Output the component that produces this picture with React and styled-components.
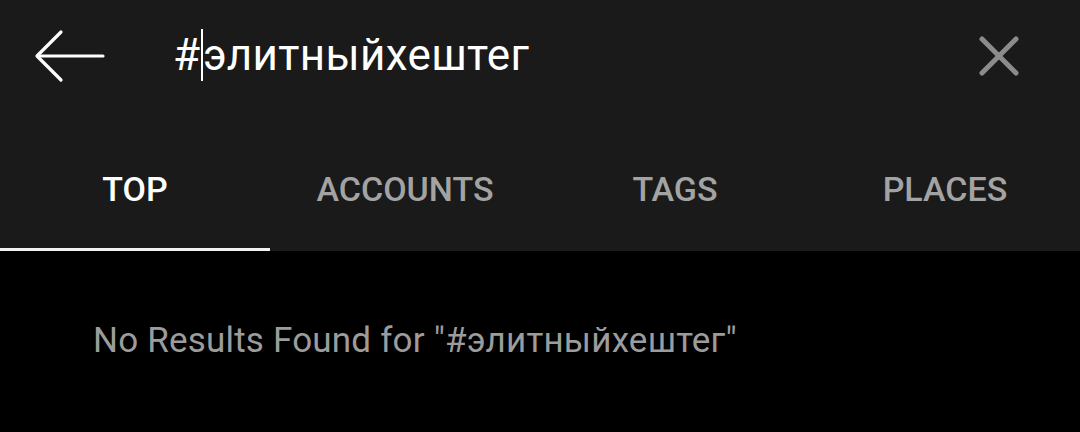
import React from "react";
import styled, { createGlobalStyle } from "styled-components";

const Global = createGlobalStyle`
  html, body { margin: 0; padding: 0; background: #000; }
  body { font-family: Roboto, "Noto Sans", sans-serif; }
`;

const Page = styled.div`
  width: 1080px;
  height: 432px;
  background: #000;
  display: flex;
  flex-direction: column;
  overflow: hidden;
`;

const Header = styled.div`
  background: #1a1a1a;
  display: flex;
  flex-direction: column;
`;

const SearchBar = styled.div`
  height: 112px;
  display: flex;
  align-items: center;
  padding: 0 61px 0 34px;
`;

const IconButton = styled.div`
  display: flex;
  align-items: center;
  justify-content: center;
  flex: none;
`;

const Query = styled.div`
  flex: 1;
  margin-left: 67px;
  color: #fff;
  font-size: 44px;
  letter-spacing: 0.35px;
  display: flex;
  align-items: center;
  margin-top: -2px;
`;

const Caret = styled.span`
  display: inline-block;
  width: 1.5px;
  height: 52px;
  background: #fff;
  margin: 0 0 0 1px;
`;

const Tabs = styled.div`
  display: grid;
  grid-template-columns: repeat(4, 1fr);
  height: 139px;
`;

const Tab = styled.div`
  display: flex;
  align-items: center;
  justify-content: center;
  font-size: 34px;
  font-weight: 500;
  color: ${p => (p.$active ? "#ffffff" : "#a3a3a3")};
  border-bottom: 3px solid ${p => (p.$active ? "#f2f2f2" : "transparent")};
  padding-top: 18px;
  box-sizing: border-box;
`;

const Empty = styled.div`
  padding: 69px 0 0 93px;
  color: #9c9c9c;
  font-size: 35px;
  letter-spacing: 0.2px;
`;

export default function App() {
  return (
    <Page>
      <Global />
      <Header>
        <SearchBar>
          <IconButton>
            <svg width="72" height="56" viewBox="0 0 72 56" fill="none" stroke="#fff" strokeWidth="3.2" strokeLinecap="round" strokeLinejoin="round">
              <path d="M69 28 H4" />
              <path d="M27 4 L3 28 L27 52" />
            </svg>
          </IconButton>
          <Query>
            #<Caret />элитныйхештег
          </Query>
          <IconButton>
            <svg width="40" height="40" viewBox="0 0 40 40" fill="none" stroke="#8c8c8c" strokeWidth="5" strokeLinecap="round">
              <path d="M3 3 L37 37" />
              <path d="M37 3 L3 37" />
            </svg>
          </IconButton>
        </SearchBar>
        <Tabs>
          <Tab $active>TOP</Tab>
          <Tab>ACCOUNTS</Tab>
          <Tab>TAGS</Tab>
          <Tab>PLACES</Tab>
        </Tabs>
      </Header>
      <Empty>No Results Found for "#элитныйхештег"</Empty>
    </Page>
  );
}
